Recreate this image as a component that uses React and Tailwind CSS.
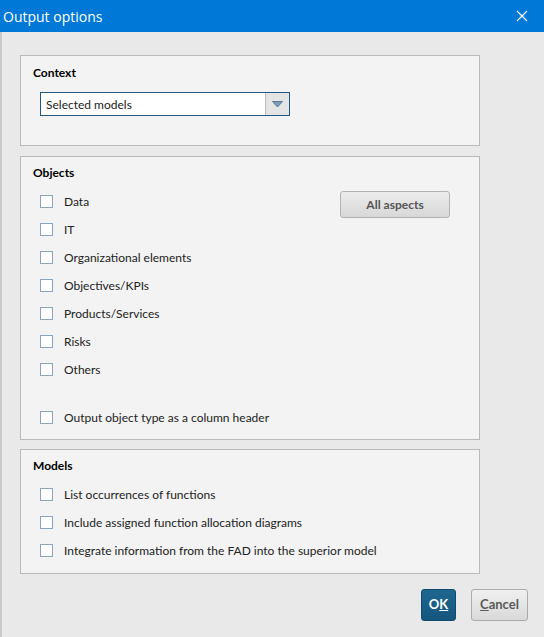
import React from "react";

const Checkbox = () => (
  <span className="w-[13px] h-[13px] border border-[#8ba3bf] bg-white shrink-0" />
);

const CheckRow = ({ label }) => (
  <div className="h-[28px] flex items-center pl-[19px]">
    <Checkbox />
    <span className="ml-[11px] pt-[2px] text-[12px] text-[#222]">{label}</span>
  </div>
);

const objects = [
  "Data",
  "IT",
  "Organizational elements",
  "Objectives/KPIs",
  "Products/Services",
  "Risks",
  "Others",
];

const models = [
  "List occurrences of functions",
  "Include assigned function allocation diagrams",
  "Integrate information from the FAD into the superior model",
];

export default function App() {
  return (
    <div
      className="w-[544px] h-[637px] bg-[#e9e9e9] flex flex-col"
      style={{ fontFamily: "Lato, 'Liberation Sans', sans-serif" }}
    >
      {/* title bar */}
      <div className="h-[32px] bg-[#0078d7] flex items-center justify-between pl-[3px] pr-[16px] shrink-0">
        <span
          className="text-white text-[14px]"
          style={{ fontFamily: "'Open Sans', 'Noto Sans', sans-serif" }}
        >
          Output options
        </span>
        <svg width="12" height="12" viewBox="0 0 12 12">
          <path d="M1 1 L11 11 M11 1 L1 11" stroke="white" strokeWidth="1.2" />
        </svg>
      </div>

      <div className="flex-1 border-l-2 border-[#c9c9c9] pl-[18px] pr-[16px] pt-[23px] flex flex-col">
        {/* Context */}
        <div className="w-[460px] border border-[#b9b9b9] bg-[#f3f3f3] pl-[12px] pb-[29px]">
          <div className="h-[32px] flex items-center pt-[1px] text-[12px] font-bold text-black">
            Context
          </div>
          <div className="mt-[4px] ml-[7px] w-[250px] h-[24px] flex border border-[#1d5a85] bg-white">
            <div className="flex-1 flex items-center pl-[5px] pt-[1px] text-[12px] text-[#222]">
              Selected models
            </div>
            <div className="w-[24px] bg-[#e4e4e4] border-l border-[#bdbdbd] flex items-center justify-center">
              <svg width="11" height="7" viewBox="0 0 11 7">
                <path d="M0.5 0.5 L10.5 0.5 L5.5 6 Z" fill="#7c9cba" stroke="#46698a" strokeWidth="0.8" />
              </svg>
            </div>
          </div>
        </div>

        {/* Objects */}
        <div className="mt-[10px] w-[460px] border border-[#b9b9b9] bg-[#f3f3f3] pb-[8px]">
          <div className="h-[30px] flex items-center pl-[12px] pt-[2px] text-[12px] font-bold text-black">
            Objects
          </div>
          <div className="flex justify-between pr-[29px]">
            <div className="flex flex-col">
              {objects.map((o) => (
                <CheckRow key={o} label={o} />
              ))}
              <div className="h-[20px]" />
              <CheckRow label="Output object type as a column header" />
            </div>
            <button className="mt-[4px] w-[110px] h-[27px] rounded-[3px] border border-[#b3b3b3] bg-gradient-to-b from-[#ececec] to-[#d8d8d8] text-[12px] font-bold text-[#555]">
              All aspects
            </button>
          </div>
        </div>

        {/* Models */}
        <div className="mt-[9px] w-[460px] border border-[#b9b9b9] bg-[#f3f3f3] pb-[9px]">
          <div className="h-[30px] flex items-center pl-[12px] pt-[2px] text-[12px] font-bold text-black">
            Models
          </div>
          {models.map((m) => (
            <CheckRow key={m} label={m} />
          ))}
        </div>

        {/* footer */}
        <div className="mt-[15px] flex justify-end gap-[15px]">
          <button className="w-[35px] h-[32px] rounded-[3px] border border-[#0f4b6f] bg-gradient-to-b from-[#1f6790] to-[#14557c] text-[13px] font-bold text-white">
            O<span className="underline">K</span>
          </button>
          <button className="w-[57px] h-[32px] rounded-[3px] border border-[#ababab] bg-gradient-to-b from-[#f0f0f0] to-[#d9d9d9] text-[13px] font-bold text-[#5a5a5a]">
            <span className="underline">C</span>ancel
          </button>
        </div>
      </div>
    </div>
  );
}
